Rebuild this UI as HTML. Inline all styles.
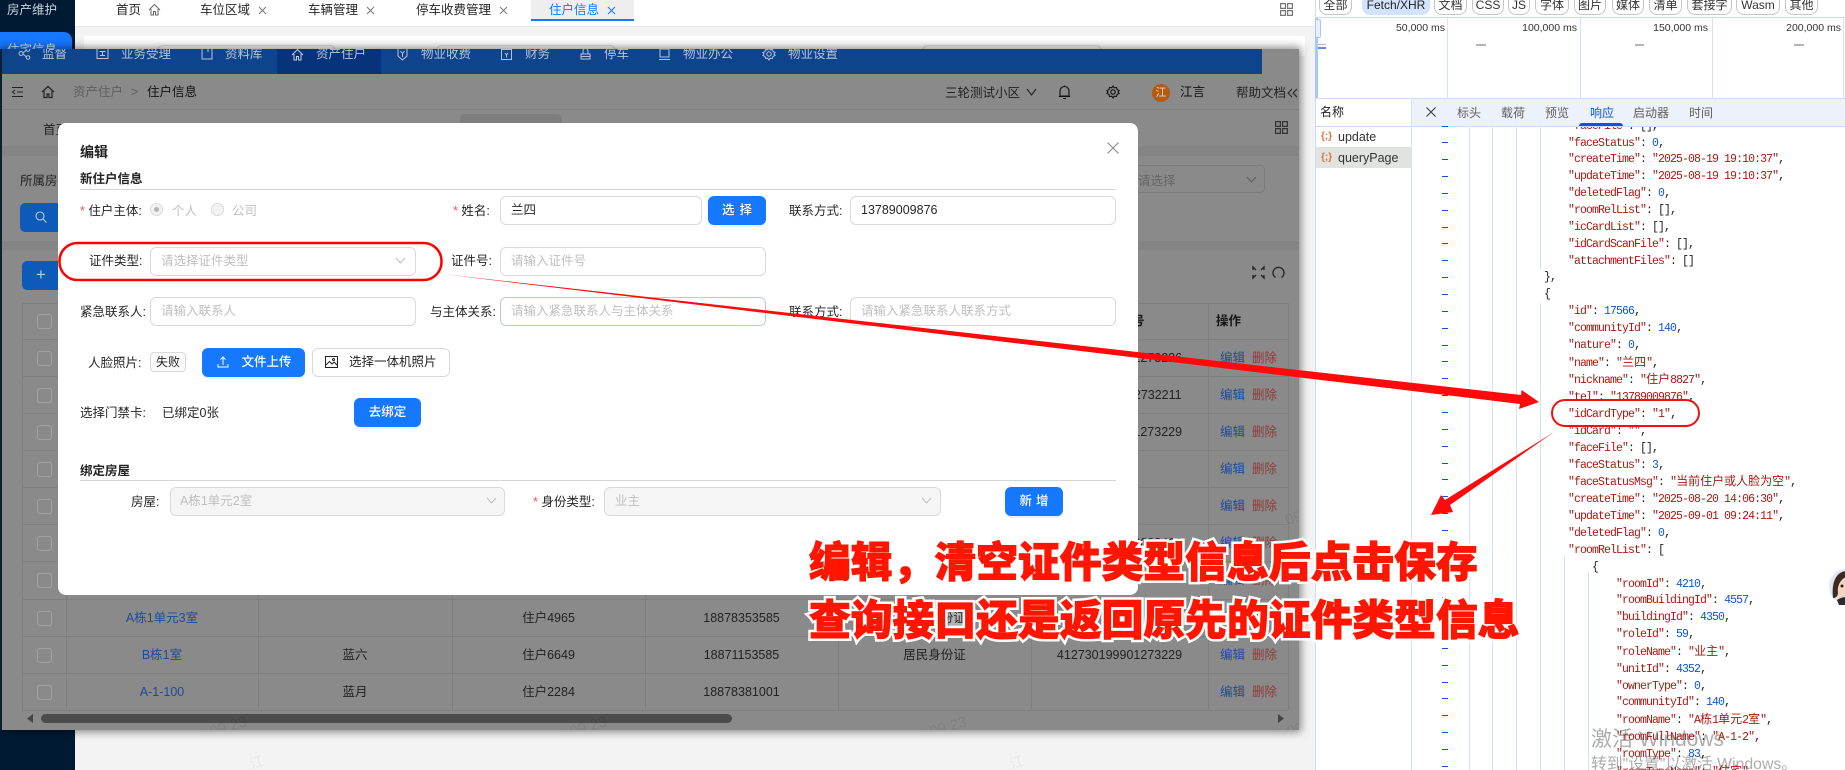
<!DOCTYPE html>
<html lang="zh-CN"><head><meta charset="utf-8"><title>住户信息</title>
<style>
html,body{margin:0;padding:0;width:1845px;height:770px;overflow:hidden;background:#fff}
body{position:relative;font-family:"Liberation Sans","Noto Sans CJK SC",sans-serif;font-size:12.5px;color:#262626}
div,span.t,svg{position:absolute}
.t{position:absolute;white-space:nowrap;line-height:20px}
.c{text-align:center}
.in{position:absolute;box-sizing:border-box;height:29px;border:1px solid #d9d9d9;border-radius:6px;background:#fff;line-height:27px;padding-left:10px;white-space:nowrap}
.ph{color:#bfbfbf}
.dis{background:#f5f5f5;color:#bfbfbf}
.btn{position:absolute;box-sizing:border-box;height:29px;border-radius:6px;background:#1677ff;color:#fff;text-align:center;line-height:29px;font-weight:500;box-shadow:0 2px 0 rgba(5,145,255,.1)}
.f{position:absolute;box-sizing:border-box;top:-6px;height:21px;border:1px solid #c4c7c5;border-radius:0 0 8px 8px;text-align:center;line-height:20px;font-size:12px;color:#333;background:#fff}
.h{position:absolute;height:1px;background:#7f7f7f}
.v{position:absolute;width:1px;background:#7f7f7f;top:303px;height:407px}
.cb{position:absolute;left:37px;width:13px;height:13px;border:1px solid #a2a2a2;border-radius:3px}
.nav{position:absolute;top:44px;line-height:20px;color:#b7c3d6;white-space:nowrap}
.rq{color:#ff4d4f}
.e{color:#1f4a98}.d{color:#8f3a3a}
.wm{position:absolute;white-space:nowrap;font-size:15px;line-height:20px;color:rgba(0,0,0,.07);transform:rotate(-17deg);transform-origin:right center}
pre{position:absolute;left:1544px;top:-8.25px;margin:0;font-family:"Liberation Mono","Noto Sans CJK SC",monospace;font-size:11.5px;letter-spacing:-.9px;line-height:16.85px;color:#1f1f1f}
pre em{font-style:normal;color:#a81a12}
pre i{font-style:normal;color:#0b57d0}
pre q{quotes:none;font-size:12px;letter-spacing:0;color:#a81a12}
.gl{position:absolute;width:1px;background:#d3e3fd}
.big{position:absolute;left:809px;white-space:nowrap;font-size:41.8px;line-height:42px;font-weight:900;color:#ff1500}
.bs{-webkit-text-stroke:6px #fff}
.bf{-webkit-text-stroke:1px #ff1500}
svg{overflow:visible}
</style></head><body>

<!-- outer page -->
<div style="left:0;top:0;width:75px;height:770px;background:#001a33"></div>
<div class="t" style="left:7px;top:0;color:#c9d2dc">房产维护</div>
<div style="left:0;top:32px;width:72px;height:30px;background:#1677ff;border-radius:0 8px 0 0"></div>
<div class="t" style="left:7px;top:40px;color:#dfeaff">住宅信息</div>
<div style="left:75px;top:0;width:1240px;height:26px;background:#fff;border-bottom:1px solid #eaeaea"></div>
<div style="left:75px;top:27px;width:1240px;height:743px;background:#f3f3f3"></div>
<div style="left:84px;top:36px;width:1221px;height:20px;background:#fff"></div>
<div style="left:157px;top:45px;width:177px;height:12px;border:1px solid #ddd;border-radius:6px"></div>
<div style="left:436px;top:45px;width:178px;height:12px;border:1px solid #ddd;border-radius:6px"></div>
<div style="left:922px;top:45px;width:178px;height:12px;border:1px solid #ddd;border-radius:6px"></div>
<div class="t" style="left:116px;top:0">首页</div>
<svg style="left:148px;top:3px" width="13" height="13" fill="none" stroke="#666" stroke-width="1"><path d="M1 7L6.500 1.500 12 7M3 6v6h2.500V8.500h2V12H10V6"/></svg>
<div class="t" style="left:200px;top:0">车位区域</div>
<div class="t" style="left:308px;top:0">车辆管理</div>
<div class="t" style="left:416px;top:0">停车收费管理</div>
<svg style="left:258px;top:6px" width="9" height="9" stroke="#777"><path d="M1 1l7 7M8 1l-7 7"/></svg>
<svg style="left:366px;top:6px" width="9" height="9" stroke="#777"><path d="M1 1l7 7M8 1l-7 7"/></svg>
<svg style="left:499px;top:6px" width="9" height="9" stroke="#777"><path d="M1 1l7 7M8 1l-7 7"/></svg>
<div style="left:531px;top:0;width:103px;height:19px;background:#eee"></div>
<div style="left:531px;top:19px;width:103px;height:2px;background:#1677ff"></div>
<div class="t" style="left:549px;top:0;color:#1677ff">住户信息</div>
<svg style="left:607px;top:6px" width="9" height="9" stroke="#1677ff"><path d="M1 1l7 7M8 1l-7 7"/></svg>
<svg style="left:1280px;top:3px" width="13" height="13" fill="none" stroke="#777" stroke-width="1.200"><path d="M.6.6h4.800v4.800H.6zM7.600.6h4.800v4.800H7.600zM.6 7.600h4.800v4.800H.6zM7.600 7.600h4.800v4.800H7.600z"/></svg>
<div class="t" style="left:250px;top:752px;font-size:14px;color:rgba(0,0,0,.05);transform:rotate(-17deg)">江</div>
<div class="t" style="left:1010px;top:752px;font-size:14px;color:rgba(0,0,0,.05);transform:rotate(-17deg)">江</div>

<!-- pasted dimmed screenshot -->
<div style="left:2px;top:49px;width:1297px;height:681px;background:#8a8a8a;box-shadow:0 0 8px 2px rgba(0,0,0,.45)"></div>
<div style="left:0;top:49px;width:2px;height:681px;background:#0e2030"></div>
<div style="left:0;top:0;width:1299px;height:730px;clip-path:inset(49px 0 0 0)">
  <div style="left:2px;top:49px;width:1260px;height:25px;background:#0d448c"></div>
  <div style="left:277px;top:49px;width:104px;height:25px;background:#07337a"></div>
  <div style="left:2px;top:109px;width:1297px;height:1px;background:#808080"></div>
  <div style="left:2px;top:146px;width:1297px;height:10px;background:#848484"></div>
  <div style="left:2px;top:241px;width:1297px;height:9px;background:#848484"></div>
  <div style="left:460px;top:114px;width:102px;height:20px;background:#7e7e7e;border-radius:5px"></div>

  <span class="nav" style="left:42px">监督</span><span class="nav" style="left:121px">业务受理</span><span class="nav" style="left:225px">资料库</span><span class="nav" style="left:316px">资产住户</span><span class="nav" style="left:421px">物业收费</span><span class="nav" style="left:525px">财务</span><span class="nav" style="left:604px">停车</span><span class="nav" style="left:683px">物业办公</span><span class="nav" style="left:788px">物业设置</span>
  <svg style="left:18px;top:47px" width="13" height="13" fill="none" stroke="#b7c3d6"><circle cx="3" cy="6.500" r="2"/><circle cx="10" cy="2.500" r="1.800"/><circle cx="10" cy="10.500" r="1.800"/><path d="M5 6l3.500-3M5 7l3.500 3"/></svg>
  <svg style="left:96px;top:47px" width="13" height="13" fill="none" stroke="#b7c3d6"><path d="M1 1.500h11v10H1zM3.500 4.500h6M6.500 4.500v4M4 8.500h5"/></svg>
  <svg style="left:201px;top:46px" width="12" height="14" fill="none" stroke="#b7c3d6"><path d="M1 1h10v12H1zM7 1v5"/></svg>
  <svg style="left:291px;top:48px" width="13" height="13" fill="none" stroke="#c5d0e0"><path d="M1 7L6.500 1.500 12 7M3 6v6h2.500V8.500h2V12H10V6"/></svg>
  <svg style="left:396px;top:47px" width="13" height="14" fill="none" stroke="#b7c3d6"><path d="M2 1h9v8l-4.500 4L2 9zM4.500 4l2 2.500 2-2.500M6.500 6.500V10"/></svg>
  <svg style="left:500px;top:47px" width="13" height="14" fill="none" stroke="#b7c3d6"><path d="M1.500 2.500h10v10h-10zM4.500 1v2M8.500 1v2M5 6l1.500 2L8 6M6.500 8v2.500"/></svg>
  <svg style="left:579px;top:47px" width="13" height="14" fill="none" stroke="#b7c3d6"><path d="M2 7h9v5H2zM4 7V4a2.500 2.500 0 0 1 5 0v3M2 9.500h9"/></svg>
  <svg style="left:658px;top:48px" width="13" height="13" fill="none" stroke="#b7c3d6"><path d="M2 1h9v8H2zM1 11.500h11"/></svg>
  <svg style="left:762px;top:47px" width="14" height="14" fill="none" stroke="#b7c3d6"><path d="M7 1l1.200 1.800 2.200-.3.700 2.100 2 1L12 7l1.100 1.400-2 1-.7 2.100-2.200-.3L7 13l-1.200-1.800-2.200.3-.7-2.100-2-1L2 7 .9 5.600l2-1 .7-2.100 2.200.3z"/><circle cx="7" cy="7" r="2.200"/></svg>

  <svg style="left:11px;top:86px" width="13" height="12" fill="none" stroke="#222"><path d="M1 1.500h11M6 6h6M1 10.500h11M4 4L1.500 6 4 8"/></svg>
  <svg style="left:41px;top:85px" width="14" height="14" fill="none" stroke="#222" stroke-width="1.200"><path d="M1 7L7 1.500 13 7M3 6v6.500h3V9h2v3.500h3V6"/></svg>
  <div class="t" style="left:73px;top:82px;color:#5e5e5e">资产住户</div>
  <div class="t" style="left:131px;top:82px;color:#5e5e5e">&gt;</div>
  <div class="t" style="left:147px;top:82px;color:#111">住户信息</div>
  <div class="t" style="left:945px;top:83px;color:#222">三轮测试小区</div>
  <svg style="left:1026px;top:88px" width="11" height="8" fill="none" stroke="#222" stroke-width="1.100"><path d="M1 1l4.500 6L10 1"/></svg>
  <svg style="left:1058px;top:85px" width="13" height="15" fill="none" stroke="#111" stroke-width="1.100"><path d="M2 11V6a4.500 4.500 0 0 1 9 0v5zM.8 11.500h11.400M5 13.500h3M6.500.5v1"/></svg>
  <svg style="left:1106px;top:85px" width="14" height="14" fill="none" stroke="#111" stroke-width="1.100"><path d="M7 1l1.200 1.800 2.200-.3.700 2.100 2 1L12 7l1.100 1.400-2 1-.7 2.100-2.200-.3L7 13l-1.200-1.800-2.200.3-.7-2.100-2-1L2 7 .9 5.600l2-1 .7-2.100 2.200.3z"/><circle cx="7" cy="7" r="2.200"/></svg>
  <div style="left:1152px;top:84px;width:18px;height:18px;border-radius:50%;background:#b55a10;color:#e8d6c2;text-align:center;line-height:18px;font-size:11px">江</div>
  <div class="t" style="left:1180px;top:82px;color:#111">江言</div>
  <div class="t" style="left:1236px;top:83px;color:#222">帮助文档</div>
  <svg style="left:1287px;top:88px" width="12" height="10" fill="none" stroke="#222"><path d="M5 1L1 5l4 4M10 1L6 5l4 4"/></svg>

  <div class="t" style="left:43px;top:120px;color:#222">首页</div>
  <svg style="left:1275px;top:121px" width="13" height="13" fill="none" stroke="#333" stroke-width="1.200"><path d="M.6.6h4.800v4.800H.6zM7.600.6h4.800v4.800H7.600zM.6 7.600h4.800v4.800H.6zM7.600 7.600h4.800v4.800H7.600z"/></svg>
  <div class="t" style="left:20px;top:171px;color:#222">所属房</div>
  <div style="left:20px;top:203px;width:50px;height:29px;background:#0d5ab8;border-radius:5px"></div>
  <svg style="left:35px;top:211px" width="12" height="12" fill="none" stroke="#b9cbe6" stroke-width="1.100"><circle cx="5" cy="5" r="4"/><path d="M8 8l3.500 3.500"/></svg>
  <div style="left:22px;top:261px;width:50px;height:29px;background:#0d5ab8;border-radius:5px"></div>
  <div class="t" style="left:36px;top:265px;color:#b9cbe6;font-size:17px">+</div>
  <div style="left:1135px;top:165px;width:130px;height:28px;box-sizing:border-box;border:1px solid #7b7b7b;border-radius:5px"></div>
  <div class="t" style="left:1138px;top:171px;color:#666">请选择</div>
  <svg style="left:1246px;top:176px" width="11" height="7" fill="none" stroke="#5e5e5e"><path d="M1 1l4.500 5L10 1"/></svg>
  <svg style="left:1252px;top:266px" width="13" height="13" fill="none" stroke="#222" stroke-width="1.300"><path d="M1 4V1h0l3 3M12 4V1L9 4M1 9v3l3-3M12 9v3L9 9"/></svg>
  <svg style="left:1272px;top:266px" width="13" height="13" fill="none" stroke="#222" stroke-width="1.300"><path d="M3.500 11.500A5.500 5.500 0 1 1 9.500 11.500"/></svg>

  <!-- table -->
  <div class="h" style="left:22px;top:303px;width:1266px"></div>
  <div class="h" style="left:22px;top:339px;width:1266px"></div><div class="h" style="left:22px;top:376px;width:1266px"></div><div class="h" style="left:22px;top:413px;width:1266px"></div><div class="h" style="left:22px;top:450px;width:1266px"></div><div class="h" style="left:22px;top:487px;width:1266px"></div><div class="h" style="left:22px;top:524px;width:1266px"></div><div class="h" style="left:22px;top:561px;width:1266px"></div><div class="h" style="left:22px;top:599px;width:1266px"></div><div class="h" style="left:22px;top:636px;width:1266px"></div><div class="h" style="left:22px;top:673px;width:1266px"></div><div class="h" style="left:22px;top:710px;width:1266px"></div>
  <div class="v" style="left:22px"></div><div class="v" style="left:66px"></div><div class="v" style="left:258px"></div><div class="v" style="left:452px"></div><div class="v" style="left:645px"></div><div class="v" style="left:838px"></div><div class="v" style="left:1031px"></div><div class="v" style="left:1208px"></div><div class="v" style="left:1288px"></div>
  <div class="cb" style="top:314px"></div><div class="cb" style="top:351px"></div><div class="cb" style="top:388px"></div><div class="cb" style="top:425px"></div><div class="cb" style="top:462px"></div><div class="cb" style="top:499px"></div><div class="cb" style="top:536px"></div><div class="cb" style="top:573px"></div><div class="cb" style="top:611px"></div><div class="cb" style="top:648px"></div><div class="cb" style="top:685px"></div>

  <div class="t c" style="left:1031px;width:177px;top:311px;font-weight:700;color:#161616">证件编号</div>
  <div class="t" style="left:1216px;top:311px;font-weight:700;color:#161616">操作</div>
  <div class="t c" style="left:1031px;width:177px;top:348px;color:#222">412730199901273226</div>
  <div class="t c" style="left:1031px;width:177px;top:385px;color:#222">412730199012732211</div>
  <div class="t c" style="left:1031px;width:177px;top:422px;color:#222">412730199901273229</div>
  <div class="t c" style="left:1031px;width:177px;top:533px;color:#222">412730199902023466</div>
  <div class="t" style="left:1220px;top:348px"><span class="e">编辑</span>&nbsp;&nbsp;<span class="d">删除</span></div>
  <div class="t" style="left:1220px;top:385px"><span class="e">编辑</span>&nbsp;&nbsp;<span class="d">删除</span></div>
  <div class="t" style="left:1220px;top:422px"><span class="e">编辑</span>&nbsp;&nbsp;<span class="d">删除</span></div>
  <div class="t" style="left:1220px;top:459px"><span class="e">编辑</span>&nbsp;&nbsp;<span class="d">删除</span></div>
  <div class="t" style="left:1220px;top:496px"><span class="e">编辑</span>&nbsp;&nbsp;<span class="d">删除</span></div>
  <div class="t" style="left:1220px;top:533px"><span class="e">编辑</span>&nbsp;&nbsp;<span class="d">删除</span></div>
  <div class="t" style="left:1220px;top:570px"><span class="e">编辑</span>&nbsp;&nbsp;<span class="d">删除</span></div>
  <div class="t" style="left:1220px;top:608px"><span class="e">编辑</span>&nbsp;&nbsp;<span class="d">删除</span></div>
  <div class="t" style="left:1220px;top:645px"><span class="e">编辑</span>&nbsp;&nbsp;<span class="d">删除</span></div>
  <div class="t" style="left:1220px;top:682px"><span class="e">编辑</span>&nbsp;&nbsp;<span class="d">删除</span></div>

  <div class="t c e" style="left:66px;width:192px;top:608px">A栋1单元3室</div>
  <div class="t c" style="left:452px;width:193px;top:608px;color:#222">住户4965</div>
  <div class="t c" style="left:645px;width:193px;top:608px;color:#222">18878353585</div>
  <div style="left:949px;top:609px;width:16px;height:18px;background:#b1b1b1"></div>
  <div class="t c" style="left:838px;width:193px;top:608px;color:#222">居民身份证</div>
  <div class="t c e" style="left:66px;width:192px;top:645px">B栋1室</div>
  <div class="t c" style="left:258px;width:194px;top:645px;color:#222">蓝六</div>
  <div class="t c" style="left:452px;width:193px;top:645px;color:#222">住户6649</div>
  <div class="t c" style="left:645px;width:193px;top:645px;color:#222">18871153585</div>
  <div class="t c" style="left:838px;width:193px;top:645px;color:#222">居民身份证</div>
  <div class="t c" style="left:1031px;width:177px;top:645px;color:#222">412730199901273229</div>
  <div class="t c e" style="left:66px;width:192px;top:682px">A-1-100</div>
  <div class="t c" style="left:258px;width:194px;top:682px;color:#222">蓝月</div>
  <div class="t c" style="left:452px;width:193px;top:682px;color:#222">住户2284</div>
  <div class="t c" style="left:645px;width:193px;top:682px;color:#222">18878381001</div>

  <div style="left:41px;top:714px;width:691px;height:9px;background:#4c4c4c;border-radius:5px"></div>
  <svg style="left:27px;top:714px" width="6" height="9" fill="#444"><path d="M6 0v9L0 4.500z"/></svg>
  <svg style="left:1278px;top:714px" width="6" height="9" fill="#444"><path d="M0 0v9l6-4.500z"/></svg>

  <div class="wm" style="right:550px;top:205px">江言 2025-09-01 09:23</div>
  <div class="wm" style="right:550px;top:365px">江言 2025-09-01 09:23</div>
  <div class="wm" style="left:1285px;top:80px">2025</div>
  <div class="wm" style="left:1285px;top:505px">09-</div>
  <div class="wm" style="left:128px;top:712px">2025-09-01 09:23</div>
  <div class="wm" style="left:488px;top:712px">2025-09-01 09:23</div>
  <div class="wm" style="left:848px;top:712px">2025-09-01 09:23</div>
  <div class="wm" style="left:1205px;top:712px">2025-09-01 09:23</div>
  <div style="left:1060px;top:548px;width:47px;height:27px;box-sizing:border-box;border:2px dashed #1677ff"></div>
</div>

<!-- modal -->
<div style="left:58px;top:123px;width:1080px;height:472px;background:#fff;border-radius:8px"></div>
<div class="t" style="left:80px;top:142px;font-size:14px;font-weight:700;color:#222">编辑</div>
<svg style="left:1107px;top:142px" width="12" height="12" stroke="#8c8c8c" stroke-width="1.100"><path d="M.5.500l11 11M11.500.500l-11 11"/></svg>
<div class="t" style="left:80px;top:169px;font-weight:700;color:#222">新住户信息</div>
<div style="left:80px;top:189px;width:1036px;height:1px;background:#d5d5d5"></div>

<div class="t" style="left:80px;top:201px"><span class="rq">*</span> 住户主体:</div>
<div style="left:150px;top:203px;width:13px;height:13px;box-sizing:border-box;border:1px solid #d9d9d9;border-radius:50%;background:#f2f2f2"></div>
<div style="left:154px;top:207px;width:5px;height:5px;border-radius:50%;background:#b5b5b5"></div>
<div class="t" style="left:172px;top:201px;color:#bfbfbf">个人</div>
<div style="left:211px;top:203px;width:13px;height:13px;box-sizing:border-box;border:1px solid #d9d9d9;border-radius:50%;background:#f2f2f2"></div>
<div class="t" style="left:232px;top:201px;color:#bfbfbf">公司</div>
<div class="t" style="left:453px;top:201px"><span class="rq">*</span> 姓名:</div>
<div class="in" style="left:500px;top:196px;width:202px">兰四</div>
<div class="btn" style="left:708px;top:196px;width:58px;letter-spacing:5px;padding-left:5px">选择</div>
<div class="t" style="left:789px;top:201px">联系方式:</div>
<div class="in" style="left:850px;top:196px;width:266px">13789009876</div>

<div class="t" style="left:89px;top:251px">证件类型:</div>
<div class="in ph" style="left:150px;top:247px;width:266px">请选择证件类型</div>
<svg style="left:395px;top:257px" width="11" height="7" fill="none" stroke="#bfbfbf"><path d="M1 1l4.500 5L10 1"/></svg>
<div class="t" style="left:451px;top:251px">证件号:</div>
<div class="in ph" style="left:500px;top:247px;width:266px">请输入证件号</div>

<div class="t" style="left:80px;top:302px">紧急联系人:</div>
<div class="in ph" style="left:150px;top:297px;width:266px">请输入联系人</div>
<div class="t" style="left:430px;top:302px">与主体关系:</div>
<div class="in ph" style="left:500px;top:297px;width:266px;border-color:#b6cae8">请输入紧急联系人与主体关系</div>
<div class="t" style="left:789px;top:302px">联系方式:</div>
<div class="in ph" style="left:850px;top:297px;width:266px">请输入紧急联系人联系方式</div>

<div class="t" style="left:88px;top:353px">人脸照片:</div>
<div style="left:150px;top:352px;width:36px;height:20px;box-sizing:border-box;border:1px solid #d9d9d9;border-radius:4px;background:#fafafa;text-align:center;line-height:18px;font-size:12px">失败</div>
<div class="btn" style="left:202px;top:348px;width:103px;padding-left:26px">文件上传</div>
<svg style="left:217px;top:356px" width="12" height="12" fill="none" stroke="#fff"><path d="M6 9V1.500M3.500 3.500L6 1l2.500 2.500M1 8v3h10V8"/></svg>
<div style="left:312px;top:348px;width:138px;height:29px;box-sizing:border-box;border:1px solid #d9d9d9;border-radius:6px;line-height:27px;padding-left:36px;white-space:nowrap">选择一体机照片</div>
<svg style="left:325px;top:356px" width="13" height="12" fill="none" stroke="#222"><path d="M.5.500h12v11H.5zM1 9l3.500-3.500L7 8l2-2 3.500 3.500"/><circle cx="8.500" cy="3.500" r="1"/></svg>

<div class="t" style="left:80px;top:403px">选择门禁卡:</div>
<div class="t" style="left:162px;top:403px">已绑定0张</div>
<div class="btn" style="left:354px;top:398px;width:67px">去绑定</div>

<div class="t" style="left:80px;top:461px;font-weight:700;color:#222">绑定房屋</div>
<div style="left:80px;top:480px;width:1036px;height:1px;background:#d5d5d5"></div>
<div class="t" style="left:131px;top:492px">房屋:</div>
<div class="in dis" style="left:170px;top:487px;width:335px;padding-left:9px">A栋1单元2室</div>
<svg style="left:486px;top:497px" width="11" height="7" fill="none" stroke="#bfbfbf"><path d="M1 1l4.500 5L10 1"/></svg>
<div class="t" style="left:533px;top:492px"><span class="rq">*</span> 身份类型:</div>
<div class="in dis" style="left:604px;top:487px;width:337px">业主</div>
<svg style="left:921px;top:497px" width="11" height="7" fill="none" stroke="#bfbfbf"><path d="M1 1l4.500 5L10 1"/></svg>
<div class="btn" style="left:1005px;top:487px;width:58px;letter-spacing:4px;padding-left:4px">新增</div>

<!-- devtools -->
<div style="left:1315px;top:0;width:530px;height:770px;background:#fff"></div>
<div style="left:1315px;top:0;width:1px;height:770px;background:#cbdcf8"></div>
<div class="f" style="left:1319px;width:33px">全部</div>
<div class="f" style="left:1362px;width:68px;background:#d3e3fd;border-color:#d3e3fd;color:#1f1f1f">Fetch/XHR</div>
<div class="f" style="left:1434px;width:33px">文档</div>
<div class="f" style="left:1472px;width:32px">CSS</div>
<div class="f" style="left:1508px;width:22px">JS</div>
<div class="f" style="left:1535px;width:34px">字体</div>
<div class="f" style="left:1574px;width:32px">图片</div>
<div class="f" style="left:1612px;width:32px">媒体</div>
<div class="f" style="left:1649px;width:33px">清单</div>
<div class="f" style="left:1687px;width:45px">套接字</div>
<div class="f" style="left:1736px;width:44px">Wasm</div>
<div class="f" style="left:1785px;width:33px">其他</div>
<div style="left:1315px;top:17px;width:530px;height:1px;background:#cbdcf8"></div>
<div style="left:1447px;top:18px;width:1px;height:80px;background:#d3e3fd"></div>
<div style="left:1580px;top:18px;width:1px;height:80px;background:#d3e3fd"></div>
<div style="left:1712px;top:18px;width:1px;height:80px;background:#d3e3fd"></div>
<div style="left:1843px;top:18px;width:1px;height:80px;background:#d3e3fd"></div>
<div style="left:1315px;top:18px;width:3px;height:80px;background:#a8c7fa"></div>
<div style="left:1315px;top:19px;width:4px;height:17px;background:#e8effc;border:1px solid #a8c7fa;border-radius:2px"></div>
<div class="t" style="right:400px;top:18px;font-size:10.5px;color:#333">50,000 ms</div>
<div class="t" style="right:268px;top:18px;font-size:10.5px;color:#333">100,000 ms</div>
<div class="t" style="right:137px;top:18px;font-size:10.5px;color:#333">150,000 ms</div>
<div class="t" style="right:4px;top:18px;font-size:10.5px;color:#333">200,000 ms</div>
<div style="left:1476px;top:44px;width:10px;height:2px;background:#b5b5b5"></div>
<div style="left:1635px;top:44px;width:9px;height:2px;background:#b5b5b5"></div>
<div style="left:1794px;top:44px;width:10px;height:2px;background:#b5b5b5"></div>
<div style="left:1318px;top:44px;width:8px;height:1px;background:#b5b5b5"></div>
<div style="left:1318px;top:47px;width:8px;height:2px;background:#5a8fe0"></div>
<div style="left:1315px;top:98px;width:530px;height:1px;background:#cbdcf8"></div>
<div style="left:1412px;top:99px;width:433px;height:27px;background:#edf1fa"></div>
<div style="left:1315px;top:126px;width:530px;height:1px;background:#cbdcf8"></div>
<div class="t" style="left:1320px;top:102px;font-size:12px;color:#222">名称</div>
<svg style="left:1426px;top:107px" width="10" height="10" stroke="#444" stroke-width="1.200"><path d="M.5.500l9 9M9.500.500l-9 9"/></svg>
<div class="t" style="left:1457px;top:103px;font-size:12px;color:#5f5f5f">标头</div>
<div class="t" style="left:1501px;top:103px;font-size:12px;color:#5f5f5f">载荷</div>
<div class="t" style="left:1545px;top:103px;font-size:12px;color:#5f5f5f">预览</div>
<div class="t" style="left:1590px;top:103px;font-size:12px;color:#0b57d0">响应</div>
<div style="left:1579px;top:123px;width:44px;height:3px;background:#0b57d0;border-radius:3px 3px 0 0"></div>
<div class="t" style="left:1633px;top:103px;font-size:12px;color:#5f5f5f">启动器</div>
<div class="t" style="left:1689px;top:103px;font-size:12px;color:#5f5f5f">时间</div>
<div style="left:1316px;top:147px;width:95px;height:21px;background:#e1e3e1"></div>
<div class="t" style="left:1321px;top:127px;font-size:10px;font-weight:700;color:#e8703a">{;}</div>
<div class="t" style="left:1321px;top:148px;font-size:10px;font-weight:700;color:#e8703a">{;}</div>
<div class="t" style="left:1338px;top:127px;color:#333">update</div>
<div class="t" style="left:1338px;top:148px;color:#333">queryPage</div>

<div class="gl" style="left:1411px;top:98px;height:672px"></div>
<div class="gl" style="left:1469px;top:126px;height:644px"></div>
<div class="gl" style="left:1492px;top:126px;height:644px"></div>
<div class="gl" style="left:1516px;top:126px;height:644px"></div>
<div class="gl" style="left:1540px;top:126px;height:144px"></div>
<div class="gl" style="left:1540px;top:303px;height:467px"></div>
<div class="gl" style="left:1564px;top:555px;height:215px"></div>
<div class="gl" style="left:1588px;top:572px;height:198px"></div>
<svg style="left:0;top:0" width="1845" height="770" fill="none" stroke="#0b57d0" shape-rendering="crispEdges"><path d="M1442 126.500h6M1442 142.500h6M1442 159.500h6M1442 176.500h6M1442 193.500h6M1442 210.500h6M1442 227.500h6M1442 243.500h6M1442 260.500h6M1442 277.500h6M1442 294.500h6M1442 311.500h6M1442 328.500h6M1442 345.500h6M1442 361.500h6M1442 378.500h6M1442 395.500h6M1442 412.500h6M1442 429.500h6M1442 446.500h6M1442 463.500h6M1442 479.500h6M1442 496.500h6M1442 513.500h6M1442 530.500h6M1442 547.500h6M1442 564.500h6M1442 581.500h6M1442 597.500h6M1442 614.500h6M1442 631.500h6M1442 648.500h6M1442 665.500h6M1442 682.500h6M1442 698.500h6M1442 715.500h6M1442 732.500h6M1442 749.500h6M1442 766.500h6"/></svg>

<div style="left:0;top:127px;width:1845px;height:643px;overflow:hidden">
<pre>    <em>"faceFile"</em>: [],
    <em>"faceStatus"</em>: <i>0</i>,
    <em>"createTime"</em>: <em>"2025-08-19 19:10:37"</em>,
    <em>"updateTime"</em>: <em>"2025-08-19 19:10:37"</em>,
    <em>"deletedFlag"</em>: <i>0</i>,
    <em>"roomRelList"</em>: [],
    <em>"icCardList"</em>: [],
    <em>"idCardScanFile"</em>: [],
    <em>"attachmentFiles"</em>: []
},
{
    <em>"id"</em>: <i>17566</i>,
    <em>"communityId"</em>: <i>140</i>,
    <em>"nature"</em>: <i>0</i>,
    <em>"name"</em>: <em>"<q>兰四</q>"</em>,
    <em>"nickname"</em>: <em>"<q>住户</q>8827"</em>,
    <em>"tel"</em>: <em>"13789009876"</em>,
    <em>"idCardType"</em>: <em>"1"</em>,
    <em>"idCard"</em>: <em>""</em>,
    <em>"faceFile"</em>: [],
    <em>"faceStatus"</em>: <i>3</i>,
    <em>"faceStatusMsg"</em>: <em>"<q>当前住户或人脸为空</q>"</em>,
    <em>"createTime"</em>: <em>"2025-08-20 14:06:30"</em>,
    <em>"updateTime"</em>: <em>"2025-09-01 09:24:11"</em>,
    <em>"deletedFlag"</em>: <i>0</i>,
    <em>"roomRelList"</em>: [
        {
            <em>"roomId"</em>: <i>4210</i>,
            <em>"roomBuildingId"</em>: <i>4557</i>,
            <em>"buildingId"</em>: <i>4350</i>,
            <em>"roleId"</em>: <i>59</i>,
            <em>"roleName"</em>: <em>"<q>业主</q>"</em>,
            <em>"unitId"</em>: <i>4352</i>,
            <em>"ownerType"</em>: <i>0</i>,
            <em>"communityId"</em>: <i>140</i>,
            <em>"roomName"</em>: <em>"A<q>栋</q>1<q>单元</q>2<q>室</q>"</em>,
            <em>"roomFullName"</em>: <em>"A-1-2"</em>,
            <em>"roomType"</em>: <i>83</i>,
            <em>"roomTypeName"</em>: <em>"<q>住宅</q>"</em>,</pre>
</div>

<!-- assistant avatar -->
<svg style="left:1829px;top:568px" width="16" height="37"><circle cx="18" cy="18.500" r="18" fill="#dfe9fb"/><circle cx="18" cy="18.500" r="15" fill="#f2d5c5"/><path d="M4 30C2 10 10 3 18 3v6C12 10 8 18 9 24c0 3-1 6-5 6z" fill="#3d2a22"/><path d="M8 32c3-2 6-3 10-3v8H10z" fill="#2b2b30"/><circle cx="13" cy="18" r="1.500" fill="#30201a"/></svg>

<!-- windows watermark -->
<div class="t" style="left:1591px;top:730px;font-size:21px;color:rgba(90,90,90,.5)">激活 Windows</div>
<div class="t" style="left:1591px;top:755px;font-size:15.8px;color:rgba(90,90,90,.5)">转到"设置"以激活 Windows。</div>

<!-- annotations -->
<svg style="left:0;top:0" width="1845" height="770" fill="none">
<rect x="59.500" y="243" width="382" height="37" rx="18" stroke="#ff0000" stroke-width="2.500"/>
<rect x="1552" y="400" width="147" height="26" rx="13" stroke="#f01010" stroke-width="2"/>
<polygon points="442,274 1521,395 1521.600,390 1539,402 1519,409 1520,404" fill="#ff0a0a"/>
<polygon points="1554,432 1450,505 1453,512 1431,515 1441,495 1445,500" fill="#ff0a0a"/>
</svg>
<div class="big bs" style="top:542px">编辑，清空证件类型信息后点击保存</div>
<div class="big bs" style="top:600px">查询接口还是返回原先的证件类型信息</div>
<div class="big bf" style="top:542px">编辑，清空证件类型信息后点击保存</div>
<div class="big bf" style="top:600px">查询接口还是返回原先的证件类型信息</div>
</body></html>
